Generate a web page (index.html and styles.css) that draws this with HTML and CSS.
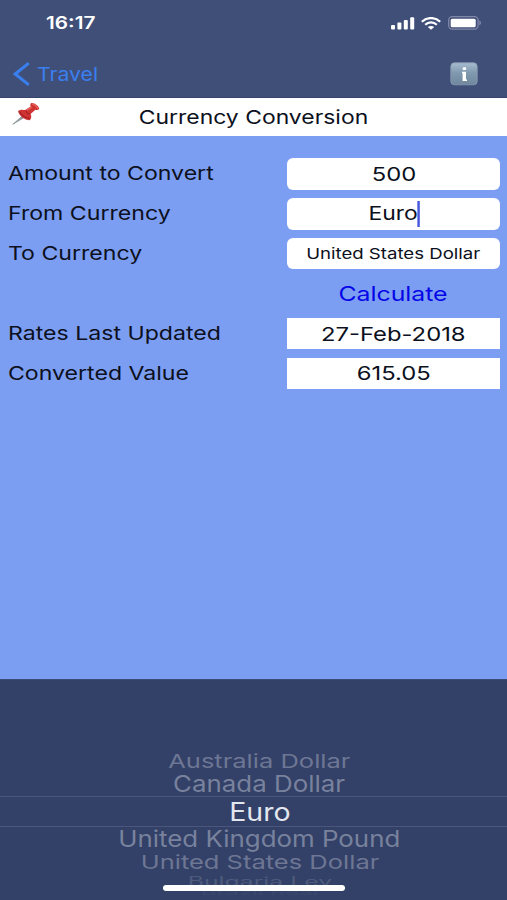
FILE: index.html
```html
<!DOCTYPE html>
<html lang="en">
<head>
    <meta charset="UTF-8">
    <meta name="viewport" content="width=device-width, initial-scale=1.0">
    <title>Currency Conversion</title>
    <link rel="stylesheet" href="styles.css">
</head>
<body>
    <header class="header">
        <div class="status-bar">
            <span class="wide time">16:17</span>
            <div class="status-icons">
                <svg class="signal" width="24" height="13" viewBox="0 0 24 13" fill="#fff">
                    <rect x="0" y="8" width="4" height="4.5" rx="1"/>
                    <rect x="6.4" y="5.5" width="4" height="7" rx="1"/>
                    <rect x="12.8" y="3" width="4" height="9.5" rx="1"/>
                    <rect x="19.2" y="0.3" width="4" height="12.2" rx="1"/>
                </svg>
                <svg class="wifi" width="20" height="13" viewBox="0 0 20 13" fill="none" stroke="#fff" stroke-width="2.2">
                    <path d="M0.8 4.7C6 -0.2 14 -0.2 19.2 4.7"/>
                    <path d="M4.2 7.7C7.5 4.6 12.5 4.6 15.8 7.7"/>
                    <path d="M10 12.7L6.8 10C8.6 8.5 11.4 8.5 13.2 10Z" fill="#fff" stroke="none"/>
                </svg>
                <svg class="battery" width="34" height="14" viewBox="0 0 34 14">
                    <rect x="0.7" y="0.7" width="29.4" height="12.4" rx="3.5" fill="none" stroke="#8087a8" stroke-width="1.3"/>
                    <rect x="2.7" y="2.7" width="25" height="8.5" rx="1.5" fill="#fff"/>
                    <path d="M31.3 4.6C33.6 5.4 33.6 8.5 31.3 9.3Z" fill="#8087a8"/>
                </svg>
            </div>
        </div>
        <nav class="nav-bar">
            <a class="back">
                <svg width="17" height="24" viewBox="0 0 17 24" fill="none" stroke="#3a7ff0" stroke-width="3">
                    <path d="M15.8 1.2L2.2 12L15.8 22.8"/>
                </svg>
                <span class="wide">Travel</span>
            </a>
            <svg class="info" width="28" height="24" viewBox="0 0 28 24">
                <defs>
                    <linearGradient id="infoFill" x1="0" y1="0" x2="0" y2="1">
                        <stop offset="0" stop-color="#a7bdd0"/>
                        <stop offset="0.45" stop-color="#8199af"/>
                        <stop offset="1" stop-color="#70879d"/>
                    </linearGradient>
                </defs>
                <rect x="0.8" y="0.8" width="26.4" height="22" rx="3.6" fill="url(#infoFill)" stroke="#8a9db4" stroke-width="0.8"/>
                <rect x="12.6" y="5.2" width="3.6" height="2.8" rx="1" fill="#fff"/>
                <path d="M12 9.8H16V17.6H17V19H12.6V11.2H12Z" fill="#fff"/>
            </svg>
        </nav>
    </header>

    <div class="title-bar">
        <svg class="pin" width="29" height="24" viewBox="0 0 29 24">
            <path d="M11 13.5L0.8 22.3L12.6 15.2Z" fill="#8d9599" stroke="#8d9599" stroke-width="0.8"/>
            <path d="M6 9C8.5 7.2 11.5 7.6 13.2 8.1L18.6 4.4C18 2.8 18.4 1.3 19.4 1C22 0.3 27 4 27.2 6.6C27 8.1 25 8.2 23.4 7.7L18.6 12C19.6 14 19.6 16.4 17.8 18.2C12.6 18 7 14 6 9Z" fill="#cf3433"/>
            <path d="M7.5 9.5C9.5 13.5 13.5 16 17.8 16.4M13.6 9C14.6 10.8 16.4 12 18 12.2" fill="none" stroke="#a82229" stroke-width="1.3"/>
            <path d="M20 2C22 2.4 24.6 4.4 26 6.3M15 8.2L19.7 5" fill="none" stroke="#ea6b60" stroke-width="1.2"/>
        </svg>
        <h1 class="wide">Currency Conversion</h1>
    </div>

    <main class="content">
        <div class="row">
            <label class="wide">Amount to Convert</label>
            <div class="field rounded"><span class="wide number">500</span></div>
        </div>
        <div class="row">
            <label class="wide">From Currency</label>
            <div class="field rounded"><span class="wide editing">Euro</span></div>
        </div>
        <div class="row">
            <label class="wide">To Currency</label>
            <div class="field rounded"><span class="wide small">United States Dollar</span></div>
        </div>
        <div class="row">
            <a class="calculate"><span class="wide">Calculate</span></a>
        </div>
        <div class="row">
            <label class="wide">Rates Last Updated</label>
            <div class="field"><span class="wide number">27-Feb-2018</span></div>
        </div>
        <div class="row">
            <label class="wide">Converted Value</label>
            <div class="field"><span class="wide number">615.05</span></div>
        </div>
    </main>

    <section class="picker">
        <div class="option far"><span>Australia Dollar</span></div>
        <div class="option near"><span>Canada Dollar</span></div>
        <div class="option selected"><span>Euro</span></div>
        <div class="option near"><span>United Kingdom Pound</span></div>
        <div class="option far"><span>United States Dollar</span></div>
        <div class="option edge"><span>Bulgaria Lev</span></div>
        <div class="option last"><span>Brazil Real</span></div>
        <div class="home-indicator"></div>
    </section>
</body>
</html>
```

FILE: styles.css
```css
* {
    margin: 0;
    padding: 0;
    box-sizing: border-box;
}

body {
    width: 507px;
    height: 900px;
    display: flex;
    flex-direction: column;
    overflow: hidden;
    background: #7c9ef2;
    font-family: Inter, 'Liberation Sans', sans-serif;
    font-size: 18.8px;
    color: #0c1020;
}

/* extended lettering */
.wide {
    display: inline-block;
    white-space: nowrap;
    transform: scaleX(1.22);
}

.header {
    height: 98px;
    background: #404f78;
    border-bottom: 1px solid #38446b;
}

.status-bar {
    height: 46px;
    display: flex;
    justify-content: space-between;
    padding: 0 25px 0 46px;
    align-items: center;
}

.time {
    color: #fff;
    font-size: 17px;
    font-weight: 600;
    transform-origin: left;
}

.status-icons {
    display: flex;
    align-items: center;
    gap: 7px;
}

.signal {
    margin-right: -1px;
}

.nav-bar {
    height: 52px;
    display: flex;
    justify-content: space-between;
    align-items: center;
    padding: 4px 29px 0 13px;
}

.back {
    display: flex;
    align-items: center;
    gap: 7px;
    color: #3a7ff0;
}

.back .wide {
    transform: scaleX(1.13);
    transform-origin: left;
}

.title-bar {
    height: 38px;
    display: grid;
    grid-template-columns: 42px 1fr 42px;
    align-items: center;
    background: #fff;
}

.pin {
    margin: -6px 0 0 12px;
}

.title-bar h1 {
    font-size: 18.8px;
    font-weight: 400;
    text-align: center;
}

.content {
    height: 543px;
    padding: 18px 7px 0 8px;
}

.row {
    height: 39.9px;
    display: flex;
    justify-content: space-between;
    align-items: center;
}

.row label {
    transform: scaleX(1.23);
    transform-origin: left;
}

.field,
.calculate {
    width: 213px;
    height: 31.5px;
    margin-left: auto;
    display: flex;
    align-items: center;
    justify-content: center;
}

.field {
    background: #fff;
}

.rounded {
    border-radius: 6px;
}

.number {
    font-size: 19.2px;
    transform: scaleX(1.24);
}

.small {
    font-size: 15px;
    transform: scaleX(1.24);
}

.editing {
    position: relative;
}

.editing::after {
    content: '';
    position: absolute;
    right: -2px;
    top: -1px;
    width: 2px;
    height: 26px;
    background: #4659dc;
}

.calculate {
    color: #0505e8;
    font-size: 20px;
}

.calculate .wide {
    transform: scaleX(1.24);
}

.picker {
    flex: 1;
    position: relative;
    padding-top: 70px;
    background: #334067;
    border-top: 1px solid #3c4b77;
    color: #78829d;
    font-size: 25px;
}

.option {
    display: flex;
    align-items: center;
    justify-content: center;
    padding-left: 12px;
    white-space: nowrap;
}

.far {
    height: 22px;
}

.far span {
    transform: scale(1.02, 0.75);
    color: #6d7794;
}

.near {
    height: 24px;
}

.near span {
    transform: scale(1.035, 0.9);
}

.selected {
    height: 31px;
    border-top: 1px solid #4b577a;
    border-bottom: 1px solid #4b577a;
    color: #e2e6ef;
}

.selected span {
    transform: scaleX(1.14);
}

.edge {
    height: 16px;
    color: #4e5a7c;
}

.edge span {
    transform: scale(0.99, 0.5);
}

.last {
    height: 8px;
    color: #3b486e;
}

.last span {
    transform: scale(0.95, 0.22);
}

.home-indicator {
    position: absolute;
    left: 163px;
    bottom: 9px;
    width: 182px;
    height: 6px;
    border-radius: 3px;
    background: #fff;
}
```
